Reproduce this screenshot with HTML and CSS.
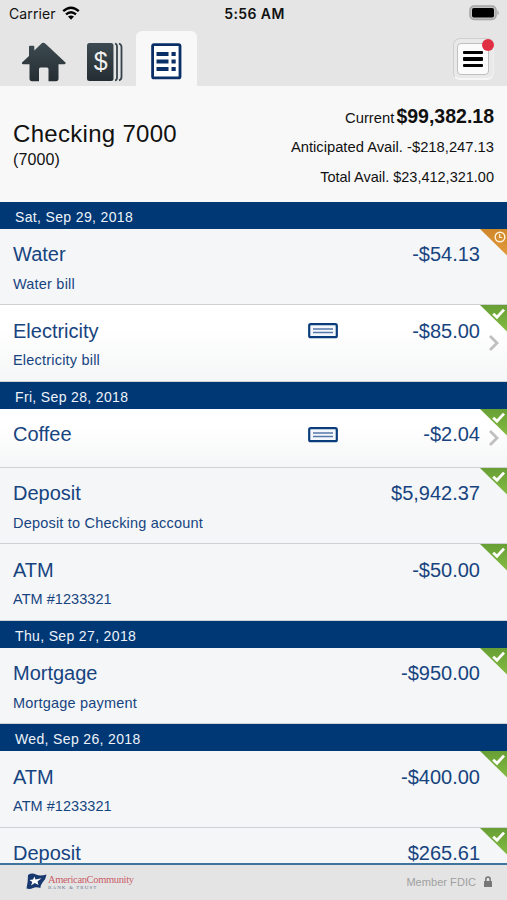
FILE: index.html
```html
<!DOCTYPE html>
<html lang="en">
<head>
    <meta charset="UTF-8">
    <meta name="viewport" content="width=device-width, initial-scale=1.0">
    <title>Checking 7000</title>
    <link rel="stylesheet" href="styles.css">
</head>
<body>
    <svg class="defs" aria-hidden="true">
        <linearGradient id="dark" x1="0" y1="0" x2="0" y2="1">
            <stop offset="0" stop-color="#3d4a51"/>
            <stop offset="1" stop-color="#242d32"/>
        </linearGradient>
        <linearGradient id="green" x1="0" y1="0" x2="0" y2="1">
            <stop offset="0" stop-color="#689f35"/>
            <stop offset="1" stop-color="#83bb42"/>
        </linearGradient>
        <linearGradient id="orange" x1="0" y1="0" x2="0" y2="1">
            <stop offset="0" stop-color="#cf872b"/>
            <stop offset="1" stop-color="#e29a3c"/>
        </linearGradient>
        <symbol id="cleared" viewBox="0 0 27 27">
            <path d="M0 0H27V26.500Z" fill="url(#green)"/>
            <path d="M13.200 8.800L17 12.300L24 4.600" fill="none" stroke="#fff" stroke-width="2.800"/>
        </symbol>
        <symbol id="pending" viewBox="0 0 27 27">
            <path d="M0 0H27V26.500Z" fill="url(#orange)"/>
            <circle cx="20" cy="8" r="4.800" fill="none" stroke="#fff3dc" stroke-width="1.400"/>
            <path d="M19.700 5V8.500H22.200" fill="none" stroke="#fff3dc" stroke-width="1.200"/>
        </symbol>
        <symbol id="check" viewBox="0 0 30 16">
            <rect x="1.200" y="1.200" width="27.600" height="13" rx="1.500" fill="#f4f8fc" stroke="#0b3d7c" stroke-width="2.200"/>
            <path d="M5 6H25M5 9.600H25" stroke="#5577a8" stroke-width="1.500"/>
        </symbol>
        <symbol id="arrow" viewBox="0 0 12 18">
            <path d="M2 2L9 9L2 16" fill="none" stroke="#bfbfbf" stroke-width="2.800"/>
        </symbol>
    </svg>

    <div class="app">
        <div class="status">
            <div class="carrier">
                <span>Carrier</span>
                <svg width="18" height="14" viewBox="0 0 18 14">
                    <path d="M1.200 5.200Q9 -1.800 16.800 5.200" fill="none" stroke="#000" stroke-width="2.400"/>
                    <path d="M4 8.400Q9 4 14 8.400" fill="none" stroke="#000" stroke-width="2.300"/>
                    <path d="M6 10.600Q9 8.200 12 10.600L9 13.800Z"/>
                </svg>
            </div>
            <div class="time">5:56 AM</div>
            <div class="battery">
                <svg width="31" height="16" viewBox="0 0 31 16">
                    <rect x="1" y="1" width="26" height="13.500" rx="4" fill="#c4c4c4" stroke="#a4a4a4" stroke-width="1.500"/>
                    <rect x="3" y="3" width="22" height="9.600" rx="1.800"/>
                    <path d="M28.500 5Q31 7.800 28.500 10.500Z" fill="#9c9c9c"/>
                </svg>
            </div>
        </div>

        <div class="tabs">
            <div class="tab">
                <svg width="45" height="40" viewBox="0 0 45 40">
                    <path d="M22 .8Q23.500 .8 25 2.200L44.500 20.500Q45 22.300 43.500 22.300H37.500V36.500Q37.500 39.200 35 39.200H27.500V27Q27.500 25.500 26 25.500H19.500Q18 25.500 18 27V39.200H11Q8.500 39.200 8.500 36.500V22.300H2Q.3 22.300 1 20.500L8 14V4.500Q8 3.800 9 3.800H12.500Q13.300 3.800 13.300 4.600V8.500L20 2Q21 .8 22 .8Z" fill="url(#dark)"/>
                </svg>
            </div>
            <div class="tab tab-accounts">
                <svg width="37" height="40" viewBox="0 0 37 40">
                    <rect x="0" y="1" width="26.500" height="38" rx="2.500" fill="url(#dark)"/>
                    <path d="M28 1.500Q30 2 30 4.500V35.500Q30 38 28 38.500M32 1.500Q34.500 2.500 34.500 5V35Q34.500 37.500 32 38.500" fill="none" stroke="#37434a" stroke-width="1.800"/>
                    <text class="dollar" x="13.800" y="27.800" text-anchor="middle">$</text>
                </svg>
            </div>
            <div class="tab tab-active">
                <svg width="31" height="37" viewBox="0 0 31 37">
                    <rect x="1.600" y="1.600" width="27.400" height="33.300" rx="1.500" fill="#fff" stroke="#092f66" stroke-width="2.800"/>
                    <path d="M5.500 11H17.500M20.500 11H24.700M5.500 18.500H17.500M20.500 18.500H24.700M5.500 26H17.500M20.500 26H24.700" stroke="#092f66" stroke-width="3.800"/>
                </svg>
            </div>
            <div class="menu">
                <div class="menu-button">
                    <span></span>
                    <span></span>
                    <span></span>
                </div>
                <div class="dot"></div>
            </div>
        </div>

        <div class="account">
            <div>
                <div class="name">Checking 7000</div>
                <div class="number">(7000)</div>
            </div>
            <div class="balances">
                <div class="balance"><span class="current">Current</span> <b>$99,382.18</b></div>
                <div class="balance">Anticipated Avail. -$218,247.13</div>
                <div class="balance balance-total">Total Avail. $23,412,321.00</div>
            </div>
        </div>

        <div class="list">
            <div class="date">Sat, Sep 29, 2018</div>
            <div class="row">
                <div class="line"><span>Water</span><span class="amount">-$54.13</span></div>
                <div class="note">Water bill</div>
                <svg class="corner"><use href="#pending"/></svg>
            </div>
            <div class="row row-link">
                <div class="line"><span>Electricity</span><svg class="check"><use href="#check"/></svg><span class="amount">-$85.00</span></div>
                <div class="note">Electricity bill</div>
                <svg class="corner"><use href="#cleared"/></svg>
                <svg class="arrow"><use href="#arrow"/></svg>
            </div>
            <div class="date">Fri, Sep 28, 2018</div>
            <div class="row row-link row-short">
                <div class="line"><span>Coffee</span><svg class="check"><use href="#check"/></svg><span class="amount">-$2.04</span></div>
                <svg class="corner"><use href="#cleared"/></svg>
                <svg class="arrow"><use href="#arrow"/></svg>
            </div>
            <div class="row">
                <div class="line"><span>Deposit</span><span class="amount">$5,942.37</span></div>
                <div class="note">Deposit to Checking account</div>
                <svg class="corner"><use href="#cleared"/></svg>
            </div>
            <div class="row">
                <div class="line"><span>ATM</span><span class="amount">-$50.00</span></div>
                <div class="note note-atm">ATM #1233321</div>
                <svg class="corner"><use href="#cleared"/></svg>
            </div>
            <div class="date">Thu, Sep 27, 2018</div>
            <div class="row">
                <div class="line"><span>Mortgage</span><span class="amount">-$950.00</span></div>
                <div class="note">Mortgage payment</div>
                <svg class="corner"><use href="#cleared"/></svg>
            </div>
            <div class="date">Wed, Sep 26, 2018</div>
            <div class="row">
                <div class="line"><span>ATM</span><span class="amount">-$400.00</span></div>
                <div class="note note-atm">ATM #1233321</div>
                <svg class="corner"><use href="#cleared"/></svg>
            </div>
            <div class="row">
                <div class="line"><span>Deposit</span><span class="amount">$265.61</span></div>
                <svg class="corner"><use href="#cleared"/></svg>
            </div>
        </div>

        <div class="footer">
            <div class="brand">
                <svg width="21" height="17" viewBox="0 0 21 17">
                    <path d="M2 2Q6 -.5 10 1.500T20.500 1.500Q20 6 16.500 9.500Q14 13 14.500 15Q10 13.500 7 15T.5 15.500Q2 9 2 2Z" fill="#17386f"/>
                    <path d="M8.500 3.500L9.500 6.400L15.500 5.200L11.500 8.600L12.500 12L8.800 10L5 12.500L6.300 9L3.500 7L7 6.500Z" fill="#fff"/>
                </svg>
                <div class="brand-text">
                    <div class="brand-name">AmericanCommunity</div>
                    <div class="brand-sub">BANK &amp; TRUST</div>
                </div>
            </div>
            <div class="fdic">
                <span>Member FDIC</span>
                <svg width="8" height="12" viewBox="0 0 8 12">
                    <path d="M1.800 6V3.500Q1.800 1 4 1T6.200 3.500V6" fill="none" stroke="#777" stroke-width="1.500"/>
                    <rect x="0" y="5" width="8" height="6" rx=".6" fill="#777"/>
                </svg>
            </div>
        </div>
    </div>
</body>
</html>
```

FILE: styles.css
```css
body {
    margin: 0;
    font-family: "Liberation Sans", Arial, sans-serif;
    background-color: #f8f8f8;
    color: #111;
}
.defs {
    position: absolute;
    width: 0;
    height: 0;
}
.app {
    display: flex;
    flex-direction: column;
    height: 900px;
    overflow: hidden;
}
svg {
    display: block;
    flex-shrink: 0;
}
.status {
    display: grid;
    grid-template-columns: 1fr auto 1fr;
    align-items: center;
    height: 28px;
    padding: 0 7px 0 9px;
    background-color: #e5e5e5;
    font-family: Inter, sans-serif;
    font-size: 14px;
}
.carrier {
    display: flex;
    align-items: center;
    gap: 6px;
    padding-bottom: 2px;
    letter-spacing: 0.1px;
}
.time {
    padding-bottom: 1px;
    font-weight: 600;
    letter-spacing: 0.4px;
}
.battery {
    display: flex;
    justify-content: flex-end;
    padding-bottom: 2px;
}
.tabs {
    display: flex;
    height: 58px;
    padding: 0 13px 0 21px;
    background-color: #e5e5e5;
}
.tab {
    box-sizing: border-box;
    width: 66px;
    padding-top: 14px;
}
.tab-accounts {
    width: 49px;
}
.tab-active {
    width: 61px;
    margin-top: 3px;
    padding: 12px 0 0 15px;
    border-radius: 6px 6px 0 0;
    background-color: #f8f8f8;
}
.dollar {
    font-family: "Liberation Sans", Arial, sans-serif;
    font-size: 25px;
    fill: #f1f1f1;
}
.menu {
    position: relative;
    box-sizing: border-box;
    width: 41px;
    height: 42px;
    margin: 10px 0 0 auto;
    padding: 4px 3px;
    border: 1px solid #d0d0d0;
    border-right-color: #f0f0f0;
    border-bottom: 2px solid #f6f6f6;
    border-radius: 7px;
    background-color: #e9e9e9;
}
.menu-button {
    box-sizing: border-box;
    display: flex;
    flex-direction: column;
    align-items: center;
    justify-content: center;
    gap: 3px;
    width: 32px;
    height: 32px;
    border: 1px solid #c0c0c0;
    border-radius: 4px;
    background-color: #fbfbfb;
}
.menu-button span {
    width: 20px;
    height: 3.500px;
    border-radius: 1px;
    background-color: #000;
}
.dot {
    position: absolute;
    top: 0;
    right: -1px;
    width: 12px;
    height: 12px;
    border-radius: 50%;
    background-color: #e02f43;
}
.account {
    box-sizing: border-box;
    display: flex;
    justify-content: space-between;
    height: 115.500px;
    padding: 0 13px;
    background-color: #f8f8f8;
}
.name {
    margin-top: 34px;
    font-size: 24px;
    line-height: 28px;
    letter-spacing: 0.3px;
}
.number {
    font-size: 16px;
    line-height: 23px;
    letter-spacing: 0.1px;
}
.balances {
    padding-top: 15px;
    text-align: right;
}
.balance {
    height: 31px;
    font-size: 14.750px;
    line-height: 30px;
    white-space: nowrap;
}
.balance-total {
    margin-top: -1px;
    font-size: 14.500px;
}
.current {
    margin-right: -2px;
}
.balance b {
    font-size: 19.500px;
}
.list {
    flex: 1;
    overflow: hidden;
}
.date {
    height: 27px;
    padding-left: 15px;
    background-color: #003876;
    color: #eef3f9;
    font-size: 14px;
    line-height: 30px;
    letter-spacing: 0.35px;
}
.row {
    position: relative;
    box-sizing: border-box;
    height: 76.500px;
    padding: 13px 27px 0 13px;
    border-bottom: 1px solid #cfd2d5;
    background-color: #f4f6f8;
    color: #17447f;
}
.row-link {
    background: linear-gradient(#fff 30%, #f5f6f7);
}
.row-short {
    height: 59px;
}
.line {
    display: grid;
    grid-template-columns: 295px 30px 1fr;
    align-items: center;
    height: 26px;
    font-size: 20px;
}
.amount {
    grid-column: 3;
    text-align: right;
}
.note {
    margin-top: 6px;
    font-size: 14.500px;
    line-height: 21px;
    letter-spacing: 0.2px;
}
.note-atm {
    letter-spacing: 0.05px;
}
.check {
    width: 30px;
    height: 16px;
}
.corner {
    position: absolute;
    top: 0;
    right: 0;
    width: 27px;
    height: 27px;
}
.arrow {
    position: absolute;
    top: 29px;
    right: 7px;
    width: 12px;
    height: 18px;
}
.row-short .arrow {
    top: 20px;
}
.footer {
    box-sizing: border-box;
    display: flex;
    justify-content: space-between;
    height: 37px;
    padding: 8px 15px 0 26px;
    border-top: 2px solid #3d759f;
    background-color: #e4e4e4;
}
.brand {
    display: flex;
    gap: 1px;
}
.brand-text {
    font-family: "Liberation Serif", serif;
}
.brand-name {
    font-size: 10.500px;
    line-height: 13px;
    letter-spacing: -0.35px;
    color: #c95e69;
}
.brand-sub {
    font-size: 5px;
    line-height: 4px;
    letter-spacing: 1.1px;
    color: #66758f;
}
.fdic {
    display: flex;
    gap: 8px;
    padding-top: 3px;
    color: #a0a0a0;
    font-size: 11px;
    line-height: 13px;
    letter-spacing: 0.05px;
}
```
